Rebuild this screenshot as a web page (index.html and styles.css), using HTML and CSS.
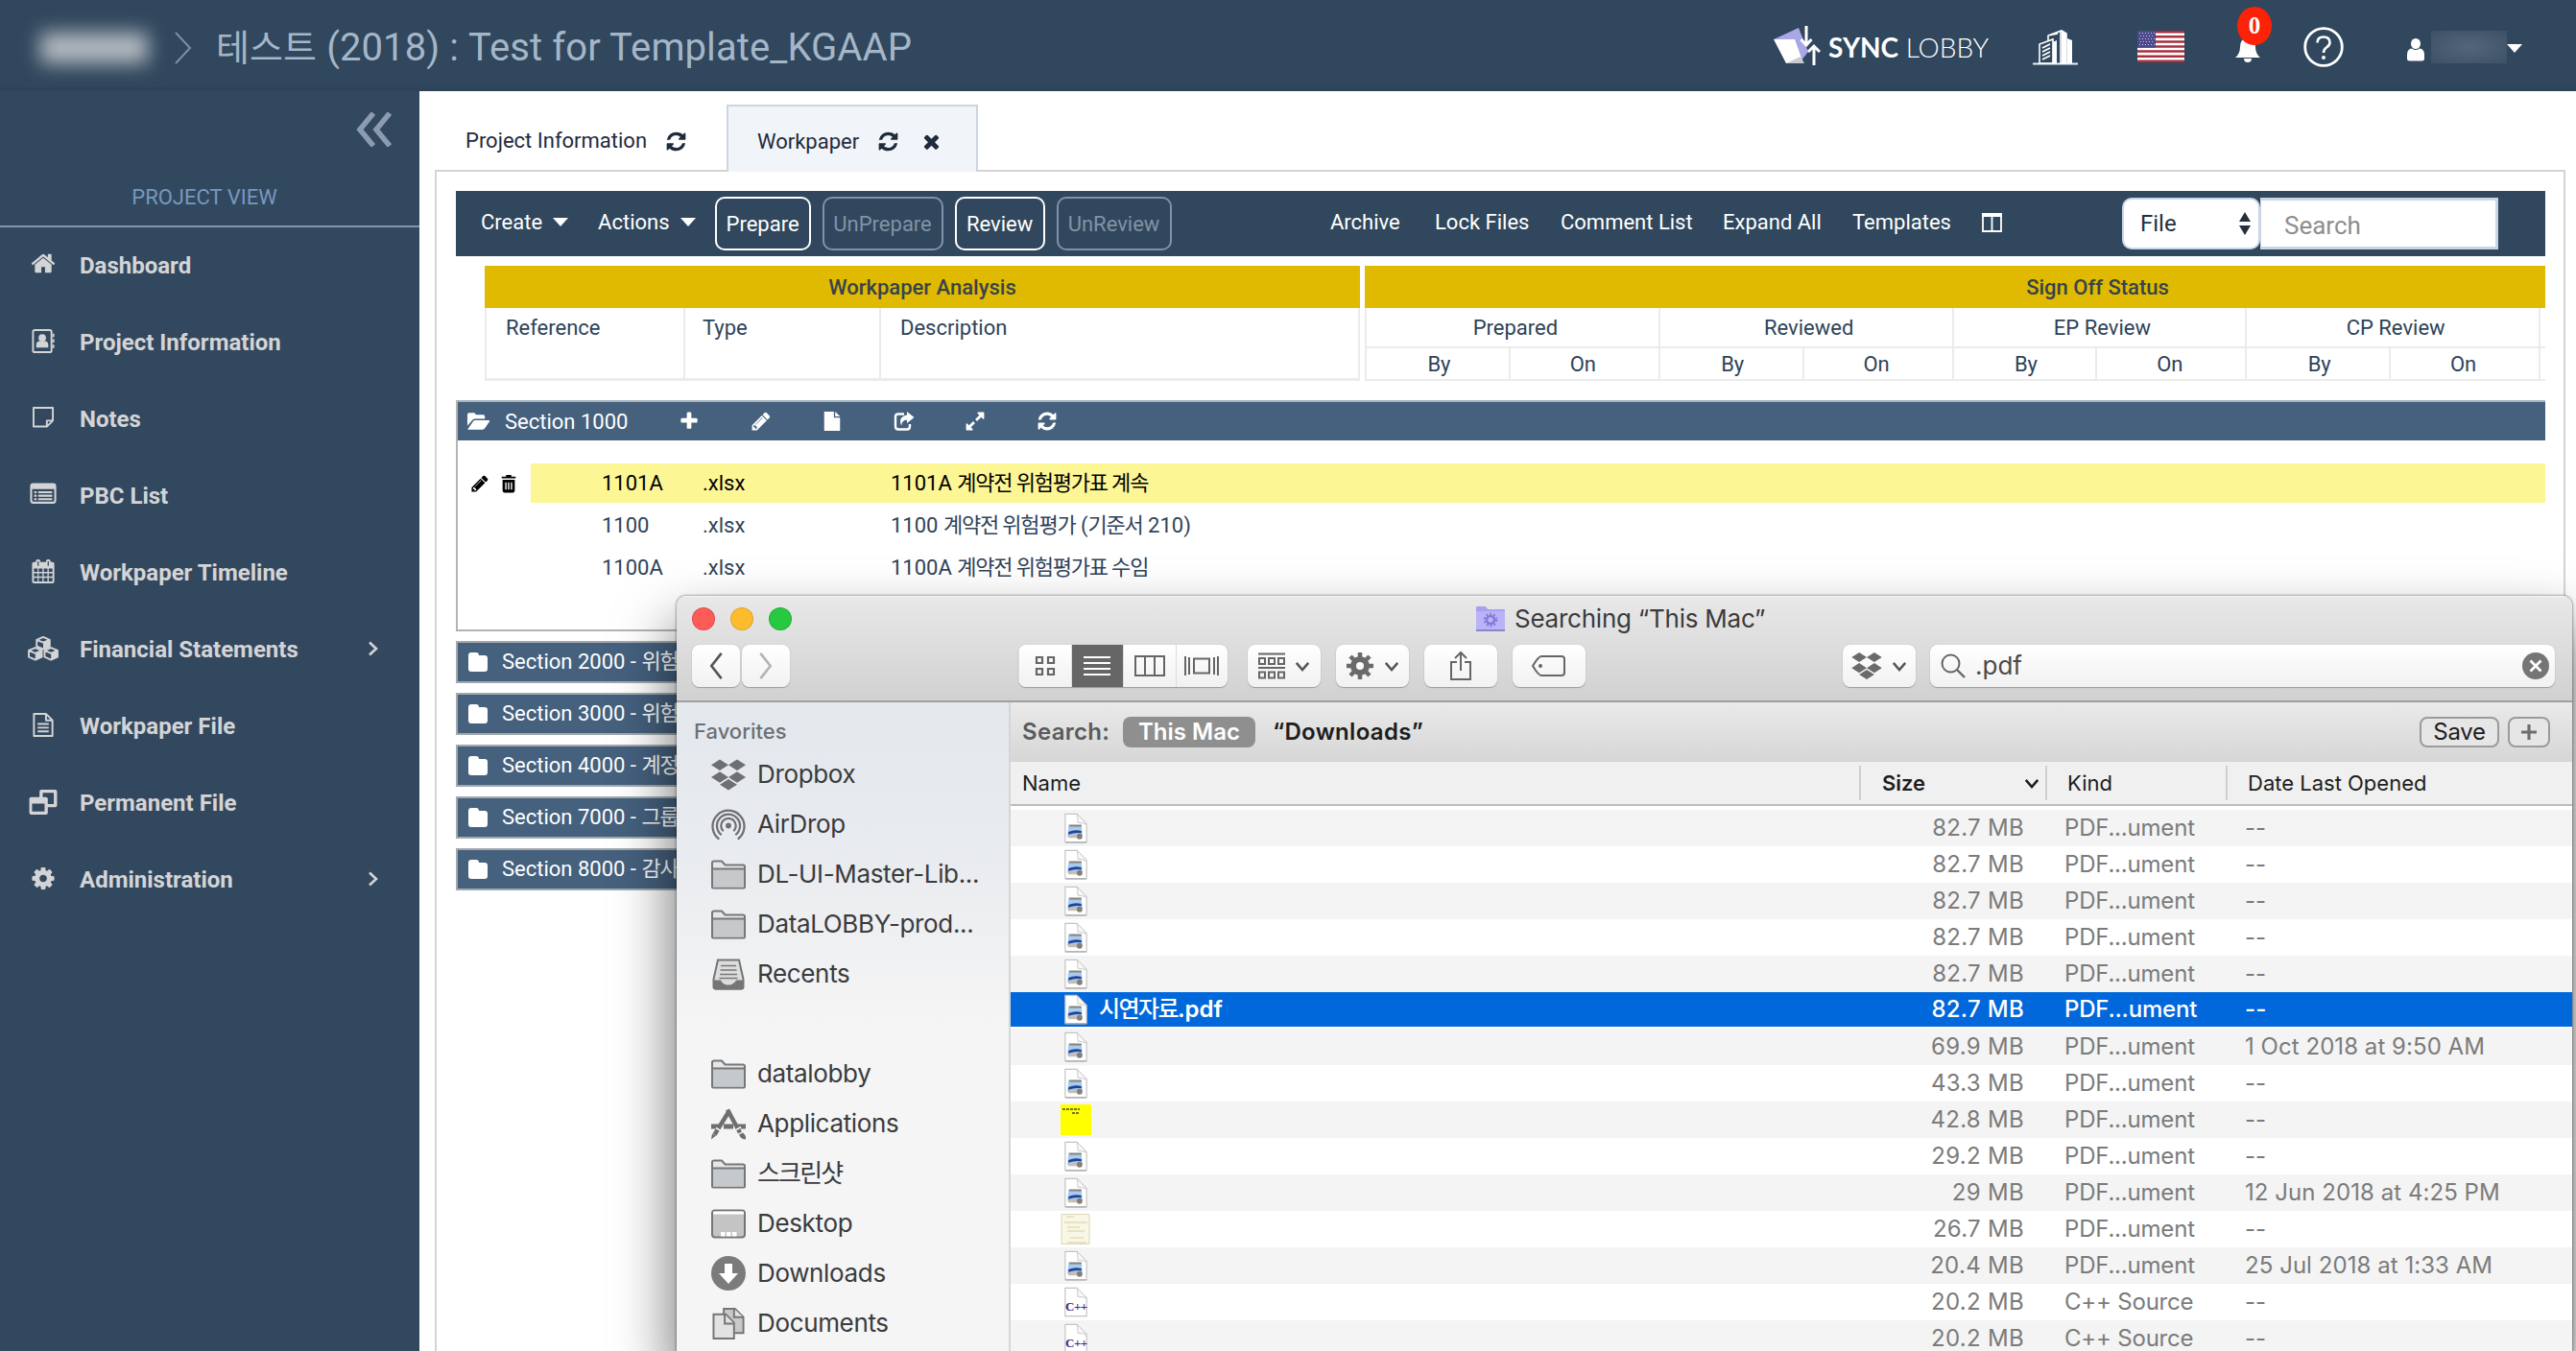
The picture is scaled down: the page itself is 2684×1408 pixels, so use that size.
FILE: index.html
```
<!DOCTYPE html>
<html lang="ko">
<head>
<meta charset="utf-8">
<title>Workpaper</title>
<link rel="stylesheet" href="styles.css">
</head>
<body>
<svg class="sprite" aria-hidden="true">
  <symbol id="home" viewBox="0 0 1792 1792"><path d="M1472 992v480q0 26-19 45t-45 19h-384v-384h-256v384h-384q-26 0-45-19t-19-45v-480q0-1 .5-3t.5-3l575-474 575 474q1 2 1 6zm223-69l-62 74q-8 9-21 11h-3q-13 0-21-7l-692-577-692 577q-12 8-24 7-13-2-21-11l-62-74q-8-10-7-23.5t11-21.5l719-599q32-26 76-26t76 26l244 204v-195q0-14 9-23t23-9h192q14 0 23 9t9 23v408l219 182q10 8 11 21.5t-7 23.5z"/></symbol>
  <symbol id="refresh" viewBox="0 0 1792 1792"><path d="M1639 1056q0 5-1 7-64 268-268 434.5t-478 166.5q-146 0-282.5-55t-243.5-157l-129 129q-19 19-45 19t-45-19-19-45v-448q0-26 19-45t45-19h448q26 0 45 19t19 45-19 45l-137 137q71 66 161 102t187 36q134 0 250-65t186-179q11-17 53-117 8-23 30-23h192q13 0 22.500 9.500t9.500 22.500zm25-800v448q0 26-19 45t-45 19h-448q-26 0-45-19t-19-45 19-45l138-138q-148-137-349-137-134 0-250 65t-186 179q-11 17-53 117-8 23-30 23h-199q-13 0-22.500-9.500t-9.500-22.500v-7q65-268 270-434.500t480-166.500q146 0 284 55.500t245 156.500l130-129q19-19 45-19t45 19 19 45z"/></symbol>
  <symbol id="times" viewBox="0 0 1792 1792"><path d="M1490 1322q0 40-28 68l-136 136q-28 28-68 28t-68-28l-294-294-294 294q-28 28-68 28t-68-28l-136-136q-28-28-28-68t28-68l294-294-294-294q-28-28-28-68t28-68l136-136q28-28 68-28t68 28l294 294 294-294q28-28 68-28t68 28l136 136q28 28 28 68t-28 68l-294 294 294 294q28 28 28 68z"/></symbol>
  <symbol id="plus" viewBox="0 0 1792 1792"><path d="M1600 736v192q0 40-28 68t-68 28h-416v416q0 40-28 68t-68 28h-192q-40 0-68-28t-28-68v-416h-416q-40 0-68-28t-28-68v-192q0-40 28-68t68-28h416v-416q0-40 28-68t68-28h192q40 0 68 28t28 68v416h416q40 0 68 28t28 68z"/></symbol>
  <symbol id="pencil" viewBox="0 0 1792 1792"><path d="M491 1536l91-91-235-235-91 91v107h128v128h107zm523-928q0-22-22-22-10 0-17 7l-542 542q-7 7-7 17 0 22 22 22 10 0 17-7l542-542q7-7 7-17zm-54-192l416 416-832 832h-416v-416zm683 96q0 53-37 90l-166 166-416-416 166-165q36-38 90-38 53 0 91 38l235 234q37 39 37 91z"/></symbol>
  <symbol id="expand" viewBox="0 0 1792 1792"><path d="M883 1056q0 13-10 23l-332 332 144 144q19 19 19 45t-19 45-45 19h-448q-26 0-45-19t-19-45v-448q0-26 19-45t45-19 45 19l144 144 332-332q10-10 23-10t23 10l114 114q10 10 10 23zm781-864v448q0 26-19 45t-45 19-45-19l-144-144-332 332q-10 10-23 10t-23-10l-114-114q-10-10-10-23t10-23l332-332-144-144q-19-19-19-45t19-45 45-19h448q26 0 45 19t19 45z"/></symbol>
  <symbol id="cog" viewBox="0 0 1792 1792"><path d="M1152 896q0-106-75-181t-181-75-181 75-75 181 75 181 181 75 181-75 75-181zm512-109v222q0 12-8 23t-20 13l-185 28q-19 54-39 91 35 50 107 138 10 12 10 25t-9 23q-27 37-99 108t-94 71q-12 0-26-9l-138-108q-44 23-91 38-16 136-29 186-7 28-36 28h-222q-14 0-24.500-8.500t-11.500-21.500l-28-184q-49-16-90-37l-141 107q-10 9-25 9-14 0-25-11-126-114-165-168-7-10-7-23 0-12 8-23 15-21 51-66.500t54-70.500q-27-50-41-99l-183-27q-13-2-21-12.500t-8-23.500v-222q0-12 8-23t19-13l186-28q14-46 39-92-40-57-107-138-10-12-10-24 0-10 9-23 26-36 98.500-107.500t94.500-71.500q13 0 26 10l138 107q44-23 91-38 16-136 29-186 7-28 36-28h222q14 0 24.500 8.500t11.500 21.500l28 184q49 16 90 37l142-107q9-9 24-9 13 0 25 10 129 119 165 170 7 8 7 22 0 12-8 23-15 21-51 66.500t-54 70.500q26 50 41 98l183 28q13 2 21 12.500t8 23.500z"/></symbol>
  <symbol id="address" viewBox="0 0 26 28"><rect x="2" y="2" width="20" height="24" rx="2" fill="none" stroke="currentColor" stroke-width="2"/><circle cx="12" cy="10.500" r="4"/><path d="M5.500 21v-3q0-4 4-4h5q4 0 4 4v3zM23 6h2v3.500h-2zM23 12h2v3.500h-2zM23 18h2v3.500h-2z"/></symbol>
  <symbol id="note" viewBox="0 0 24 24"><path d="M1.500 2h21v14l-6.500 6.500H1.500zM22.500 16H16v6.500" fill="none" stroke="currentColor" stroke-width="2" stroke-linejoin="round"/></symbol>
  <symbol id="listalt" viewBox="0 0 26 22"><rect x="1" y="1.500" width="24" height="18.500" rx="2" fill="none" stroke="currentColor" stroke-width="2"/><path d="M1 1.500h24v5H1zM4 8.500h2.500v2H4zM8 8.500h14v2H8zM4 12h2.500v2H4zM8 12h14v2H8zM4 15.500h2.500v2H4zM8 15.500h14v2H8z"/></symbol>
  <symbol id="calendar" viewBox="0 0 26 28"><path fill-rule="evenodd" d="M3 4h2V3q0-2 2-2h1q2 0 2 2v1h6V3q0-2 2-2h1q2 0 2 2v1h2q2 0 2 2v19q0 2-2 2H3q-2 0-2-2V6q0-2 2-2zm0 7v3.500h4V11zm5.200 0v3.500h4V11zm5.400 0v3.500h4V11zm5.400 0v3.500h4V11zM3 16v3.500h4V16zm5.200 0v3.500h4V16zm5.400 0v3.500h4V16zm5.400 0v3.500h4V16zM3 21v4h4v-4zm5.200 0v4h4v-4zm5.400 0v4h4v-4zm5.400 0v4h4v-4zM6.900 3v5h1.300V3zm10.900 0v5h1.300V3z"/></symbol>
  <symbol id="cubes" viewBox="0 0 34 28"><g fill="none" stroke="currentColor" stroke-width="2" stroke-linejoin="round"><path d="M17 2l7 3v7l-7 3-7-3V5zM10 5l7 3 7-3M8.500 13.500l7 3v7l-7 3-7-3v-7zM1.500 16.500l7 3 7-3M25.500 13.500l7 3v7l-7 3-7-3v-7zM18.500 16.500l7 3 7-3"/></g><path d="M17 8l7-3v7l-7 3zM8.500 19.500l7-3v7l-7 3zM25.500 19.500l7-3v7l-7 3z"/></symbol>
  <symbol id="filetext" viewBox="0 0 24 28"><path d="M2 2h13l7 7v17H2zM15 2v7h7" fill="none" stroke="currentColor" stroke-width="2" stroke-linejoin="round"/><path d="M6 12h12v2H6zM6 16h12v2H6zM6 20h12v2H6z"/></symbol>
  <symbol id="clone" viewBox="0 0 32 28"><path fill-rule="evenodd" d="M14 1h15q2 0 2 2v15q0 2-2 2h-8v6q0 2-2 2H3q-2 0-2-2V11q0-2 2-2h9V3q0-2 2-2zm1.500 3.500V9H19q2 0 2 2v5.500h6.500v-12zM4 16v8.500h13.500V16z"/></symbol>
  <symbol id="folder" viewBox="0 0 22 22"><path d="M1 4q0-3 3-3h5q3 0 3 3h6q3 0 3 3v11q0 3-3 3H4q-3 0-3-3z"/></symbol>
  <symbol id="folderopen" viewBox="0 0 26 20"><path d="M1 15V3q0-2 2-2h5q2 0 2 2h8q2 0 2 2v2.500H9q-2 0-3 1.600zM1.500 18.500L7 10.500q.7-1.500 2.500-1.500H24q1.800 0 .8 1.500L20 17.500q-1 1.500-2.500 1.500H2.500q-1.500 0-1-.5z"/></symbol>
  <symbol id="file" viewBox="0 0 20 24"><path d="M1 1h11v7h7v15H1zM13.500 1L19 6.500h-5.500z"/></symbol>
  <symbol id="share" viewBox="0 0 22 22"><path d="M11 3.500H5q-3 0-3 3v10q0 3 3 3h9q3 0 3-3V14" fill="none" stroke="currentColor" stroke-width="2.400"/><path d="M14 1l7.500 6-7.500 6V9.500q-5 0-6 6-3.500-9 6-11z"/></symbol>
  <symbol id="trash" viewBox="0 0 18 22"><path fill-rule="evenodd" d="M6 3V1h6v2h5v2H1V3zM2 6.500h14V19q0 2.500-2.500 2.500h-9Q2 21.500 2 19zm3 3V18h1.500V9.500zm3.200 0V18h1.500V9.500zm3.300 0V18H13V9.500z"/></symbol>
  <symbol id="chev" viewBox="0 0 12 16"><path d="M2 1.500l7 6.500-7 6.500" fill="none" stroke="currentColor" stroke-width="2.600"/></symbol>
  <symbol id="down" viewBox="0 0 18 12"><path d="M2 2l7 8 7-8" fill="none" stroke="currentColor" stroke-width="2.800"/></symbol>
  <symbol id="dropbox" viewBox="0 0 36 32"><path d="M9 0l9 5.800-9 5.700-9-5.700zM27 0l9 5.800-9 5.700-9-5.700zM9 12.700l9 5.800-9 5.700-9-5.700zM27 12.700l9 5.800-9 5.700-9-5.700zM18 20.500l9 5.800-9 5.700-9-5.700z"/></symbol>
  <symbol id="fold" viewBox="0 0 36 30"><path d="M1 28V3q0-2 2-2h8l3.500 4H33q2 0 2 2v21q0 1-1 1H2q-1 0-1-1z" fill="#e4e6e8" stroke="#757779" stroke-width="2"/><path d="M2 9h32v19H2z" fill="#c6c9cb"/><path d="M1 9h34" stroke="#757779" stroke-width="2"/></symbol>
  <symbol id="airdrop" viewBox="0 0 36 34"><g fill="none" stroke="currentColor" stroke-width="2.300"><path d="M8 32.500A17 17 0 1 1 28 32.500"/><path d="M10.500 28A12.400 12.400 0 1 1 25.500 28"/><path d="M12.500 24A8 8 0 1 1 23.500 24"/></g><circle cx="18" cy="18" r="3"/></symbol>
  <symbol id="recents" viewBox="0 0 36 32"><path d="M7 1h22l4.500 20v8q0 2-2 2h-27q-2 0-2-2v-8z" fill="#dcdddd" stroke="#757575" stroke-width="2"/><path d="M10 7h16M9.500 11.500h17M9 16h18M8.500 20h19" stroke="#777" stroke-width="1.600"/><path d="M2 22h8q2 5 8 5t8-5h8v7q0 3-3 3H5q-3 0-3-3z" fill="#757575"/></symbol>
  <symbol id="apps" viewBox="0 0 36 32"><path d="M0 16h10v5H0zM13 16h10v5H13zM28 16h8v5h-8z"/><path d="M19 2L3.500 27" stroke="currentColor" stroke-width="4.500"/><path d="M17 1l13 24" stroke="currentColor" stroke-width="4.500"/><path d="M1 26l4 2-5 4zM29 27l4-2q4 3 3 7-5 0-7-5z"/><path d="M5 20l5 3M26 22l5-3" stroke="#f5f5f5" stroke-width="1.500"/></symbol>
  <symbol id="desktop" viewBox="0 0 36 30"><rect x="1" y="1" width="34" height="28" rx="3" fill="#c4c4c4" stroke="#757575" stroke-width="2"/><path d="M2 5V3q0-1 1-1h30q1 0 1 1v2z" fill="#fff"/><path d="M10 23.500h4.500V28H10zM16 23.500h4.500V28H16zM22 23.500h4.500V28H22z" fill="#fff"/></symbol>
  <symbol id="dl" viewBox="0 0 36 36"><circle cx="18" cy="18" r="18" fill="#7b7b7b"/><path d="M14 8h8v10h6L18 29 8 18h6z" fill="#fff"/></symbol>
  <symbol id="docs" viewBox="0 0 36 34"><g fill="#e2e2e2" stroke="#757575" stroke-width="2"><path d="M13 1h12l9 9v17H13z" fill="#c9c9c9"/><path d="M24 1v9h10"/><path d="M2 7h13l9 9v17H2z"/><path d="M14 7v10h10"/></g></symbol>
  <symbol id="pdf" viewBox="0 0 26 33"><path d="M1.500 1.500H14L24.500 12v19.500h-23z" fill="#fff" stroke="#c3c3c6" stroke-width="1.200"/><path d="M2 32h22" stroke="#aaa" stroke-width="1.200"/><path d="M14.500 2q1 6 .5 8.500 5 0 9 2" fill="#fafafa" stroke="#c9c4c8"/><path d="M5 13h14l1 12H4z" fill="#a9cbf0"/><path d="M6 13h13v2H6z" fill="#8a8676"/><path d="M5 20.500q7-3 14-1v2.500q-7-1-14 1.500z" fill="#1e4597"/><path d="M4 24l14-1v4H5z" fill="#c4beb5"/><circle cx="17" cy="25.500" r="3" fill="#857d78"/></symbol>
  <symbol id="cpp" viewBox="0 0 26 33"><path d="M1.500 1.500H14L24.500 12v19.500h-23z" fill="#fff" stroke="#c3c3c6" stroke-width="1.200"/><path d="M14.500 2q1 6 .5 8.500 5 0 9 2" fill="#fafafa" stroke="#c9c4c8"/></symbol>
</svg>

<header class="topbar">
  <div class="crumbs">
    <span class="redacted-name"></span>
    <svg class="crumb-sep" viewBox="0 0 20 34"><path d="M2 1l15 16L2 33" fill="none" stroke="#7e90a3" stroke-width="2"/></svg>
    <h1><span class="ko-title">테스트</span> (2018) : Test for Template_KGAAP</h1>
  </div>
  <div class="tools">
    <svg class="logo" viewBox="0 0 52 44"><path d="M3 15L29 3l10 25-8 10-11-23z" fill="#a9a7e6"/><path d="M3 15h22l9 25H16z" fill="#fff"/><path d="M16 40l15-7 4 7z" fill="#c9c9d2"/><g fill="none" stroke="#fff" stroke-width="3"><path d="M37 1v19M31.500 15l5.500 6 5.500-6M45 42V23M39 28l6-6 6 6"/></g></svg>
    <div class="brand"><b>SYNC</b> LOBBY</div>
    <svg class="building" viewBox="0 0 47 38"><path d="M0 36.500h47" stroke="#e6f2fb" stroke-width="2"/><path d="M7 36V16l14-5v25zM16 12V7l14-5 5 3v31h-6V3M16 7l10-2" fill="none" stroke="#fff" stroke-width="1.600"/><path d="M21 14l4-2v24h-4zM30 2l5 3v31h-5zM36 10l5 2v24h-5z" fill="#fff"/><path d="M10 20l8-4M10 24l8-4M10 28l8-4M10 32l8-4" stroke="#fff" stroke-width="1.800"/></svg>
    <svg class="flag" viewBox="0 0 49 33"><path fill="#fff" d="M0 0h49v33H0z"/><path fill="#a8303f" d="M0 0h49v2.500H0zM0 5.100h49v2.500H0zM0 10.200h49v2.500H0zM0 15.200h49v2.500H0zM0 20.300h49v2.500H0zM0 25.400h49v2.500H0zM0 30.500h49V33H0z"/><path fill="#4c4a8c" d="M0 0h19v17.700H0z"/><path d="M2 2.500h16M3 5.500h15M2 8.500h16M3 11.500h15M2 14.500h16" stroke="#c6c6e2" stroke-width="1" stroke-dasharray="1 2"/></svg>
    <div class="bell"><svg viewBox="0 0 26 26"><path d="M13 0q8 1 8 10 0 7 5 11H0q5-4 5-11 0-9 8-10zM9 22h8q0 4-4 4t-4-4z" fill="#fff"/></svg><span class="badge">0</span></div>
    <svg class="help" viewBox="0 0 42 42"><circle cx="21" cy="21" r="19.300" fill="none" stroke="#fff" stroke-width="2.800"/><path d="M14.500 16.500q0-6 6.500-6t6.500 5.800q0 3-3.500 5.200-3 2-3 5.500" fill="none" stroke="#fff" stroke-width="2.600"/><circle cx="21" cy="32" r="2" fill="#fff"/></svg>
    <svg class="user" viewBox="0 0 18 24"><ellipse cx="9" cy="5.500" rx="5" ry="5.500" fill="#fff"/><path d="M0 21v-4q0-6 5-6.500 4 3 8 0 5 .5 5 6.500v4q0 2.500-2.500 2.500h-13Q0 23.500 0 21z" fill="#fff"/></svg>
    <span class="redacted-user"></span>
    <i class="caret"></i>
  </div>
</header>

<div class="shell">
  <nav class="side">
    <div class="collapse"><svg viewBox="0 0 38 36"><path d="M18 1L4 18l14 17M35 1L21 18l14 17" fill="none" stroke="#8c9cb0" stroke-width="5.500"/></svg></div>
    <div class="side-title">PROJECT VIEW</div>
    <ul>
      <li><svg class="up"><use href="#home"/></svg><span>Dashboard</span></li>
      <li><svg><use href="#address"/></svg><span>Project Information</span></li>
      <li><svg class="sm"><use href="#note"/></svg><span>Notes</span></li>
      <li><svg class="sm"><use href="#listalt"/></svg><span>PBC List</span></li>
      <li><svg><use href="#calendar"/></svg><span>Workpaper Timeline</span></li>
      <li><svg class="wide"><use href="#cubes"/></svg><span>Financial Statements</span><svg class="more"><use href="#chev"/></svg></li>
      <li><svg><use href="#filetext"/></svg><span>Workpaper File</span></li>
      <li><svg class="wide"><use href="#clone"/></svg><span>Permanent File</span></li>
      <li><svg><use href="#cog"/></svg><span>Administration</span><svg class="more"><use href="#chev"/></svg></li>
    </ul>
  </nav>

  <main>
    <div class="tabs">
      <div class="tab">Project Information<svg><use href="#refresh"/></svg></div>
      <div class="tab active">Workpaper<svg><use href="#refresh"/></svg><svg><use href="#times"/></svg></div>
    </div>
    <div class="panel">
      <div class="toolbar">
        <div class="tb-left">
          <span class="menu">Create<i class="caret"></i></span>
          <span class="menu">Actions<i class="caret"></i></span>
          <button>Prepare</button><button class="off">UnPrepare</button><button>Review</button><button class="off">UnReview</button>
        </div>
        <div class="tb-mid">
          <span class="l1">Archive</span><span class="l2">Lock Files</span><span class="l3">Comment List</span><span class="l4">Expand All</span><span class="l5">Templates</span>
          <svg viewBox="0 0 21 20"><path d="M1 2h19v17H1zM10.500 2v17" fill="none" stroke="#fff" stroke-width="1.800"/><path d="M0 0h21v4H0z" fill="#fff"/></svg>
        </div>
        <div class="tb-right">
          <div class="select">File<svg viewBox="0 0 12 26"><path d="M6 1l6 10H0zM6 25l6-10H0z" fill="#25303e"/></svg></div>
          <div class="search">Search</div>
        </div>
      </div>

      <div class="heads">
        <div class="analysis">
          <div class="gold">Workpaper Analysis</div>
          <div class="cols"><span>Reference</span><span>Type</span><span>Description</span></div>
        </div>
        <div class="signoff">
          <div class="gold">Sign Off Status</div>
          <div class="groups"><span>Prepared</span><span>Reviewed</span><span>EP Review</span><span>CP Review</span></div>
          <div class="subs"><span>By</span><span>On</span><span>By</span><span>On</span><span>By</span><span>On</span><span>By</span><span>On</span></div>
        </div>
      </div>

      <section class="open">
        <div class="bar"><svg class="fo"><use href="#folderopen"/></svg><span>Section 1000</span>
          <svg><use href="#plus"/></svg><svg><use href="#pencil"/></svg><svg class="tall"><use href="#file"/></svg><svg><use href="#share"/></svg><svg><use href="#expand"/></svg><svg><use href="#refresh"/></svg></div>
        <div class="row hot"><div class="acts"><svg><use href="#pencil"/></svg><svg><use href="#trash"/></svg></div><div class="cells"><span>1101A</span><span>.xlsx</span><span>1101A <em>계약전 위험평가표 계속</em></span></div></div>
        <div class="row"><div class="acts"></div><div class="cells"><span>1100</span><span>.xlsx</span><span>1100 <em>계약전 위험평가</em> (<em>기준서</em> 210)</span></div></div>
        <div class="row"><div class="acts"></div><div class="cells"><span>1100A</span><span>.xlsx</span><span>1100A <em>계약전 위험평가표 수임</em></span></div></div>
      </section>
      <div class="closed"><svg><use href="#folder"/></svg>Section 2000 - <em>위험</em></div>
      <div class="closed"><svg><use href="#folder"/></svg>Section 3000 - <em>위험</em></div>
      <div class="closed"><svg><use href="#folder"/></svg>Section 4000 - <em>계정</em></div>
      <div class="closed"><svg><use href="#folder"/></svg>Section 7000 - <em>그룹</em></div>
      <div class="closed"><svg><use href="#folder"/></svg>Section 8000 - <em>감사</em></div>
    </div>
  </main>
</div>

<div class="finder">
  <div class="chrome">
    <div class="titlebar">
      <div class="lights"><i class="red"></i><i class="yellow"></i><i class="green"></i></div>
      <svg class="smart" viewBox="0 0 30 26"><path d="M0 1q0-1 1-1h9l2 3h17q1 0 1 1v21H0z" fill="#a9a0ef"/><path d="M0 5h30v19H0z" fill="#b9b3f7"/><path d="M0 25h30" stroke="#8d86c4" stroke-width="2"/><circle cx="15" cy="14" r="4" fill="none" stroke="#8478d8" stroke-width="2.400"/><circle cx="15" cy="14" r="6.300" fill="none" stroke="#8478d8" stroke-width="2" stroke-dasharray="2 2"/></svg>
      <span>Searching “This Mac”</span>
    </div>
    <div class="buttons">
      <div class="btn nav"><svg viewBox="0 0 16 32"><path d="M14 2L3 16l11 14" fill="none" stroke="#555" stroke-width="2.800"/></svg></div>
      <div class="btn nav fwd"><svg viewBox="0 0 16 32"><path d="M2 2l11 14L2 30" fill="none" stroke="#b4b4b4" stroke-width="2.800"/></svg></div>
      <div class="btn views">
        <div><svg viewBox="0 0 22 22"><path d="M2 2h6v6H2zM14 2h6v6h-6zM2 14h6v6H2zM14 14h6v6h-6z" fill="none" stroke="#666" stroke-width="2.200"/></svg></div>
        <div class="on"><svg class="w28" viewBox="0 0 28 22"><path d="M0 2h28M0 8h28M0 14h28M0 20h28" stroke="#fff" stroke-width="2.200"/></svg></div>
        <div><svg class="w32" viewBox="0 0 32 22"><path d="M1 1h30v20H1zM11 1v20M21 1v20" fill="none" stroke="#666" stroke-width="2"/></svg></div>
        <div><svg class="w36" viewBox="0 0 36 22"><path d="M1 1v20M5 2v18M35 1v20M31 2v18M10 3.500h16v15H10z" fill="none" stroke="#666" stroke-width="2"/></svg></div>
      </div>
      <div class="btn b1"><svg class="w28" viewBox="0 0 28 28"><path d="M0 1.500h28M0 16h28" stroke="#666" stroke-width="2"/><path d="M1 6h6v6H1zM11 6h6v6h-6zM21 6h6v6h-6zM1 20.500h6v6H1zM11 20.500h6v6h-6zM21 20.500h6v6h-6z" fill="none" stroke="#666" stroke-width="2"/></svg><svg class="dn"><use href="#down"/></svg></div>
      <div class="btn b2"><svg class="w30" viewBox="0 0 30 30"><path d="M15 1v28M1 15h28M5 5l20 20M25 5L5 25" stroke="#6a6a6a" stroke-width="4.500"/><circle cx="15" cy="15" r="7" fill="#fafafa" stroke="#6a6a6a" stroke-width="6"/></svg><svg class="dn"><use href="#down"/></svg></div>
      <div class="btn b3"><svg class="w24" viewBox="0 0 24 32"><path d="M8 12H2v18h20V12h-6M12 21V3M6 8l6-6 6 6" fill="none" stroke="#666" stroke-width="2"/></svg></div>
      <div class="btn b4"><svg class="w36" viewBox="0 0 36 22"><path d="M10 1h21q3 0 3 3v14q0 3-3 3H10q-3 0-9-10 6-10 9-10z" fill="none" stroke="#666" stroke-width="2"/><circle cx="9" cy="11" r="2" fill="#666"/></svg></div>
      <div class="btn b5"><svg class="w32 dk"><use href="#dropbox"/></svg><svg class="dn"><use href="#down"/></svg></div>
      <div class="btn find"><svg class="glass" viewBox="0 0 26 26"><circle cx="10.500" cy="10.500" r="9" fill="none" stroke="#666" stroke-width="2"/><path d="M17 17l8 8" stroke="#666" stroke-width="2.400"/></svg><span>.pdf</span><svg class="clear" viewBox="0 0 28 28"><circle cx="14" cy="14" r="14" fill="#757575"/><path d="M8.500 8.500l11 11M19.500 8.500l-11 11" stroke="#fff" stroke-width="2.800"/></svg></div>
    </div>
  </div>
  <div class="fbody">
    <aside>
      <h2>Favorites</h2>
      <div class="fav"><svg class="gr"><use href="#dropbox"/></svg>Dropbox</div>
      <div class="fav"><svg class="gr"><use href="#airdrop"/></svg>AirDrop</div>
      <div class="fav"><svg><use href="#fold"/></svg>DL-UI-Master-Lib...</div>
      <div class="fav"><svg><use href="#fold"/></svg>DataLOBBY-prod...</div>
      <div class="fav"><svg><use href="#recents"/></svg>Recents</div>
      <div class="fav"></div>
      <div class="fav"><svg><use href="#fold"/></svg>datalobby</div>
      <div class="fav"><svg class="gr"><use href="#apps"/></svg>Applications</div>
      <div class="fav"><svg><use href="#fold"/></svg><em>스크린샷</em></div>
      <div class="fav"><svg><use href="#desktop"/></svg>Desktop</div>
      <div class="fav"><svg class="rd"><use href="#dl"/></svg>Downloads</div>
      <div class="fav"><svg><use href="#docs"/></svg>Documents</div>
    </aside>
    <div class="files">
      <div class="scope"><span class="lbl">Search:</span><span class="pill">This Mac</span><span class="alt">“Downloads”</span><span class="save">Save</span><span class="add"><svg viewBox="0 0 16 16"><path d="M8 0v16M0 8h16" stroke="#6e6e6e" stroke-width="3.200"/></svg></span></div>
      <div class="fhead"><div>Name</div><div class="sz">Size<svg class="dn"><use href="#down"/></svg></div><div>Kind</div><div>Date Last Opened</div></div>
      <div class="list">
        <div class="f"><svg><use href="#pdf"/></svg><span></span><span>82.7 MB</span><span>PDF...ument</span><span>--</span></div>
        <div class="f"><svg><use href="#pdf"/></svg><span></span><span>82.7 MB</span><span>PDF...ument</span><span>--</span></div>
        <div class="f"><svg><use href="#pdf"/></svg><span></span><span>82.7 MB</span><span>PDF...ument</span><span>--</span></div>
        <div class="f"><svg><use href="#pdf"/></svg><span></span><span>82.7 MB</span><span>PDF...ument</span><span>--</span></div>
        <div class="f"><svg><use href="#pdf"/></svg><span></span><span>82.7 MB</span><span>PDF...ument</span><span>--</span></div>
        <div class="f sel"><svg><use href="#pdf"/></svg><span><em>시연자료</em>.pdf</span><span>82.7 MB</span><span>PDF...ument</span><span>--</span></div>
        <div class="f"><svg><use href="#pdf"/></svg><span></span><span>69.9 MB</span><span>PDF...ument</span><span>1 Oct 2018 at 9:50 AM</span></div>
        <div class="f"><svg><use href="#pdf"/></svg><span></span><span>43.3 MB</span><span>PDF...ument</span><span>--</span></div>
        <div class="f"><svg viewBox="0 0 32 32"><path fill="#ff0" d="M0 0h32v32H0z"/><path d="M2 5h18M12 9h8" stroke="#77751a" stroke-width="2" stroke-dasharray="3 1"/></svg><span></span><span>42.8 MB</span><span>PDF...ument</span><span>--</span></div>
        <div class="f"><svg><use href="#pdf"/></svg><span></span><span>29.2 MB</span><span>PDF...ument</span><span>--</span></div>
        <div class="f"><svg><use href="#pdf"/></svg><span></span><span>29 MB</span><span>PDF...ument</span><span>12 Jun 2018 at 4:25 PM</span></div>
        <div class="f"><svg viewBox="0 0 32 32"><path fill="#f8f6e4" stroke="#dcd8b8" d="M1 .5h29v31H1z"/><path d="M6 3h8M4 9h24M7 14h13M7 18h18M10 25h14M7 30h20" stroke="#d9cfa8" stroke-width="1"/></svg><span></span><span>26.7 MB</span><span>PDF...ument</span><span>--</span></div>
        <div class="f"><svg><use href="#pdf"/></svg><span></span><span>20.4 MB</span><span>PDF...ument</span><span>25 Jul 2018 at 1:33 AM</span></div>
        <div class="f"><svg viewBox="0 0 32 32"><use href="#cpp" x="3" width="26" height="32"/><text x="5" y="25" class="cpp-text">C++</text></svg><span></span><span>20.2 MB</span><span>C++ Source</span><span>--</span></div>
        <div class="f"><svg viewBox="0 0 32 32"><use href="#cpp" x="3" width="26" height="32"/><text x="5" y="25" class="cpp-text">C++</text></svg><span></span><span>20.2 MB</span><span>C++ Source</span><span>--</span></div>
      </div>
    </div>
  </div>
</div>
</body>
</html>
```
FILE: styles.css
```
* { box-sizing: border-box; }
html, body { height: 100%; }
body {
  margin: 0; overflow: hidden; position: relative; background: #fff;
  display: flex; flex-direction: column;
  font: 22px/26px Roboto, "Noto Sans CJK KR", sans-serif; color: #2f4358;
}
svg { fill: currentColor; flex: none; display: block; }
em { font-style: normal; letter-spacing: -1.2px; }
.sprite { display: none; }
.caret { flex: none; width: 0; height: 0; border: 8px solid transparent; border-top: 9px solid #fff; border-bottom: 0; }

/* top bar */
.topbar { flex: none; height: 95px; background: #30475d; display: grid; grid-template-columns: 1845px 1fr; border-bottom: 4px solid #2f4358; }
.crumbs { display: flex; align-items: center; padding: 9px 0 0 42px; }
.redacted-name { width: 112px; height: 32px; background: #b4bac1; filter: blur(10px); }
.crumb-sep { width: 20px; height: 34px; margin: 0 24px 0 27px; }
h1 { margin: 0; font-size: 40px; line-height: 48px; font-weight: 400; color: #a4b6c8; white-space: nowrap; letter-spacing: .09px; }
.ko-title { font-size: 38px; }
.tools { display: flex; align-items: center; padding-top: 6px; color: #fff; }
.logo { width: 52px; height: 44px; margin-top: -2px; }
.brand { margin-left: 8px; width: 168px; font: 300 28px/34px Lato, sans-serif; letter-spacing: -.02px; white-space: nowrap; }
.brand b { font-weight: 700; }
.building { width: 47px; height: 38px; margin-left: 45px; }
.flag { width: 49px; height: 33px; margin-left: 62px; }
.bell { position: relative; width: 26px; height: 26px; margin: 6px 0 0 53px; }
.badge { position: absolute; left: 2px; top: -32px; width: 36px; height: 40px; border-radius: 50%; background: #fb2207; font: bold 25px/39px "Liberation Serif", serif; text-align: center; }
.help { width: 42px; height: 42px; margin-left: 45px; }
.user { width: 18px; height: 24px; margin: 6px 0 0 66px; }
.redacted-user { width: 79px; height: 34px; margin-left: 7px; background: radial-gradient(#536579, #3c5167); }
.tools > .caret { margin-top: 3px; }

/* left navigation */
.shell { flex: 1; display: flex; min-height: 0; }
.side { flex: none; width: 437px; background: #32485f; color: #d4d4d6; }
.collapse { height: 92px; padding: 22px 28px 0 0; display: flex; justify-content: flex-end; }
.collapse svg { width: 38px; height: 36px; }
.side-title { height: 50px; padding: 6px 11px 0 0; text-align: center; color: #7698bd; border-bottom: 2px solid #8197b0; }
.side ul { list-style: none; margin: 0; padding: 0; }
.side li { height: 80px; display: flex; align-items: center; font-weight: 700; font-size: 24px; padding: 0 0 0 25px; }
.side li svg { width: 40px; height: 27px; margin-top: -3px; }
.side li svg.sm { height: 23px; margin-top: -6px; }
.side li svg.up { margin-top: -5px; }
.side li span { margin-left: 18px; flex: 1; }
.side li svg.more { width: 12px; height: 16px; margin: -2px 42px 0 0; }

/* tabs */
main { flex: 1; min-width: 0; padding: 14px 11px 0 16px; display: flex; flex-direction: column; }
.tabs { flex: none; display: flex; height: 69px; position: relative; z-index: 1; margin-bottom: -1px; }
.tab { width: 304px; padding: 7px 0 0 32px; display: flex; align-items: center; color: #1f2b3c; }
.tab svg { width: 23px; height: 23px; margin-left: 19px; }
.tab svg + svg { margin-left: 22px; }
.tab.active { width: 262px; background: #f1f4f8; border: 2px solid #cdd5e3; border-bottom: 0; padding: 5px 0 0 30px; height: 70px; }
.panel { flex: 1; min-height: 0; border: 2px solid #d4d4d6; border-bottom: 0; padding: 20px 19px 0 20px; }

/* toolbar */
.toolbar { height: 68px; background: #30475d; color: #fff; display: grid; grid-template-columns: 911px 825px 1fr; align-items: center; }
.tb-left { display: flex; align-items: center; padding-left: 26px; }
.menu { display: flex; align-items: center; gap: 11px; margin: -3px 31px 0 0; }
.menu + .menu { margin-right: 20px; }
.toolbar button { height: 56px; padding: 1px 0 0; width: 100px; margin-right: 12px; background: none; border: 2px solid #fff; border-radius: 10px; color: #fff; font: inherit; text-align: center; }
.toolbar button.off { width: 126px; border-color: #8293a5; color: #8293a5; }
.toolbar button:nth-of-type(3) { width: 94px; }
.toolbar button:nth-of-type(4) { width: 120px; }
.tb-mid { display: flex; align-items: center; margin-top: -3px; white-space: nowrap; }
.l1 { width: 109px; } .l2 { width: 131px; } .l3 { width: 169px; } .l4 { width: 135px; } .l5 { width: 135px; }
.tb-mid svg { width: 21px; height: 20px; }
.tb-right { display: flex; }
.select { width: 144px; height: 54px; border: 2px solid #c9d6e6; border-radius: 10px; background: #fff; color: #25303e; font-size: 24px; line-height: 50px; padding: 0 8px 0 17px; display: flex; justify-content: space-between; align-items: center; }
.select svg { width: 12px; height: 26px; }
.search { width: 248px; height: 54px; background: #fff; border: 3px solid #c9d6e6; border-left-width: 1px; font-size: 26px; line-height: 52px; color: #8e8e8e; padding-left: 24px; }

/* table heads */
.heads { display: flex; gap: 5px; margin-top: 10px; padding-left: 30px; }
.gold { height: 44px; background: #e0ba00; font-weight: 500; line-height: 45px; text-align: center; color: #37434c; }
.analysis { width: 912px; }
.cols { height: 76px; display: grid; grid-template-columns: 205px 204px 1fr; border: solid #ebebeb; border-width: 0 2px 3px 2px; line-height: 41px; }
.cols span { padding-left: 20px; border-left: 2px solid #ebebeb; }
.cols span:first-child { border: 0; }
.cols span:nth-child(2) { padding-left: 18px; }
.signoff { flex: 1; }
.signoff .gold { padding-left: 297px; }
.groups, .subs { display: grid; border-bottom: 2px solid #ebebeb; border-left: 2px solid #ebebeb; padding-right: 5px; text-align: center; }
.groups { height: 42px; grid-template-columns: repeat(4, 1fr); line-height: 41px; }
.subs { height: 34px; grid-template-columns: repeat(4, 150fr 156fr); line-height: 33px; }
.groups span, .subs span { border-right: 2px solid #ebebeb; }
.groups span { padding-left: 6px; }
.subs span:nth-child(odd) { padding-left: 3px; }
.subs span:nth-child(even) { padding-right: 3px; }

/* sections */
section.open { margin-top: 20px; height: 241px; border-left: 2px solid #b3b3b3; border-bottom: 2px solid #b3b3b3; }
.bar { height: 42px; background: #45617e; color: #fff; border-top: 2px solid #a9b4bd; display: flex; align-items: center; }
.bar svg { width: 22px; height: 22px; margin-right: 52.500px; }
.bar svg.fo { width: 25px; height: 20px; margin: 0 15px 0 9px; }
.bar span { width: 181px; padding-top: 1px; }
.row { height: 40px; margin-bottom: 4px; display: grid; grid-template-columns: 76px 1fr; }
.bar + .row { margin-top: 24px; }
.acts { display: flex; align-items: center; gap: 10px; padding-left: 13px; color: #000; }
.acts svg { width: 20px; height: 20px; }
.cells { display: grid; grid-template-columns: 105px 196px 1fr; padding-left: 74px; line-height: 41px; }
.hot .cells { background: #fdf695; color: #000; }
.closed { height: 44px; margin-top: 10px; background: #45617e; border: 2px solid #a3a9ae; color: #fff; display: flex; align-items: center; white-space: pre; }
.closed svg { width: 22px; height: 22px; margin: 0 14px 0 10px; }

/* file browser window */
.finder { position: absolute; left: 705px; top: 621px; bottom: 0; width: 1975px; border-radius: 10px 10px 0 0; box-shadow: 0 0 2px 1px rgba(0,0,0,.3), 0 34px 60px 4px rgba(0,0,0,.55); overflow: hidden; background: #fff; display: flex; flex-direction: column; font-family: Inter, "Noto Sans CJK KR", sans-serif; }
.chrome { flex: none; height: 111px; background: linear-gradient(#e9e8e9, #d2d1d2); border-bottom: 2px solid #a0a0a0; border-top: 1px solid #f6f6f6; }
.titlebar { display: flex; align-items: center; height: 46px; font-size: 26px; letter-spacing: -.24px; color: #3b3b3b; }
.lights { display: flex; gap: 16px; width: 833px; padding-left: 16px; }
.lights i { width: 24px; height: 24px; border-radius: 50%; border: 1px solid rgba(0,0,0,.12); }
.red { background: #fc5b57; } .yellow { background: #fdbc2e; } .green { background: #27c940; }
.smart { width: 30px; height: 26px; margin-right: 10px; }
.buttons { display: flex; margin-top: 4px; padding-left: 16px; }
.btn { height: 44px; border-radius: 8px; background: linear-gradient(#fff, #f1f1f1); box-shadow: 0 1px 1px #999, 0 0 1px #aaa; display: flex; align-items: center; justify-content: center; gap: 10px; color: #555; width: 76px; }
.nav { width: 50px; margin-right: 2px; }
.nav svg { width: 16px; height: 30px; }
.views { width: 218px; margin-left: 236px; overflow: hidden; gap: 0; }
.views div { flex: 1; height: 44px; display: flex; align-items: center; justify-content: center; border-left: 1px solid #ddd; }
.views .on { background: #666; }
.views svg { width: 22px; height: 22px; }
.views .w28 { width: 28px; } .views .w32 { width: 32px; } .views .w36 { width: 36px; }
.w24 { width: 24px; height: 32px; } .w28 { width: 28px; height: 28px; } .w30 { width: 30px; height: 30px; } .w32 { width: 32px; height: 28px; } .w36 { width: 36px; height: 22px; }
.dk { color: #6a6a6a; }
.dn { width: 16px; height: 11px; }
.b1 { margin-left: 21px; } .b2 { margin-left: 16px; } .b3 { margin-left: 16px; } .b4 { margin-left: 16px; } .b5 { margin-left: 268px; }
.find { width: 651px; margin-left: 15px; padding: 0 6px 0 11px; font-size: 26px; color: #4a4a4a; }
.find span { flex: 1; }
.glass { width: 26px; height: 26px; } .clear { width: 28px; height: 28px; }

.fbody { flex: 1; display: flex; min-height: 0; }
aside { width: 348px; overflow: hidden; border-right: 2px solid #d3d6d8; background: linear-gradient(#e3e8ed, #e8ebef 150px, #f5f5f5 340px); font-size: 26px; letter-spacing: -.35px; color: #3a3b3d; padding-left: 18px; }
aside h2 { margin: 17px 0 6px; font-size: 22px; line-height: 26px; font-weight: 500; letter-spacing: 0; color: #6c7074; }
.fav { height: 52px; display: flex; align-items: center; padding-left: 18px; white-space: nowrap; }
.fav svg { width: 36px; height: 33px; margin-right: 12px; }
.fav .rd { height: 36px; }
.fav .gr { color: #6d6f71; }
.fav em { letter-spacing: -1.800px; }
.files { flex: 1; display: flex; flex-direction: column; min-height: 0; }
.scope { flex: none; height: 62px; background: linear-gradient(#eaeaea, #d6d6d6); display: flex; align-items: center; padding: 0 23px 0 12px; font-size: 24px; font-weight: 600; color: #1d1d1d; letter-spacing: .3px; }
.lbl { color: #5b5b5b; width: 105px; }
.pill { width: 138px; height: 32px; border-radius: 8px; background: #8f8f8f; color: #fff; line-height: 31px; text-align: center; margin-right: 18px; letter-spacing: 0; }
.alt { flex: 1; }
.save, .add { height: 32px; border: 2px solid #9b9b9b; border-radius: 8px; background: #e6e6e6; display: flex; align-items: center; justify-content: center; font-weight: 400; letter-spacing: -.3px; width: 83px; }
.add { width: 44px; margin-left: 9px; }
.add svg { width: 16px; height: 16px; }
.fhead { flex: none; height: 46px; background: #f0f0f0; border-bottom: 2px solid #bcbcbc; display: grid; grid-template-columns: 884px 194px 188px 1fr; padding-top: 4px; color: #1d1d1d; font-size: 22px; }
.fhead div { height: 36px; line-height: 36px; padding-left: 21px; border-left: 2px solid #cfcfcf; }
.fhead div:first-child { padding-left: 12px; border: 0; }
.fhead .sz { font-weight: 600; display: flex; justify-content: space-between; align-items: center; padding-right: 6px; padding-left: 22px; }
.list { flex: 1; min-height: 0; overflow: hidden; padding-top: 4px; color: #7b7b7b; font-size: 24px; }
.f { height: 38px; display: grid; grid-template-columns: 92px 793px 194px 188px 1fr; align-items: center; line-height: 38px; }
.f:nth-child(odd) { background: #f4f4f4; }
.f svg { width: 32px; height: 32px; margin-left: 52px; }
.f span:nth-child(3) { text-align: right; padding-right: 23px; letter-spacing: .3px; }
.f span:nth-child(4) { padding-left: 19px; letter-spacing: -.2px; }
.f span:nth-child(5) { padding-left: 19px; letter-spacing: .05px; }
.f.sel { height: 36px; margin-bottom: 2px; background: #0068da; color: #fff; font-weight: 600; line-height: 36px; }
.f.sel em { font-weight: 500; letter-spacing: -1.600px; }
.f.sel span:nth-child(n+3) { font-weight: 500; }
.cpp-text { font: bold 13px "Liberation Serif", serif; letter-spacing: -.5px; fill: #3a2a86; }
```
